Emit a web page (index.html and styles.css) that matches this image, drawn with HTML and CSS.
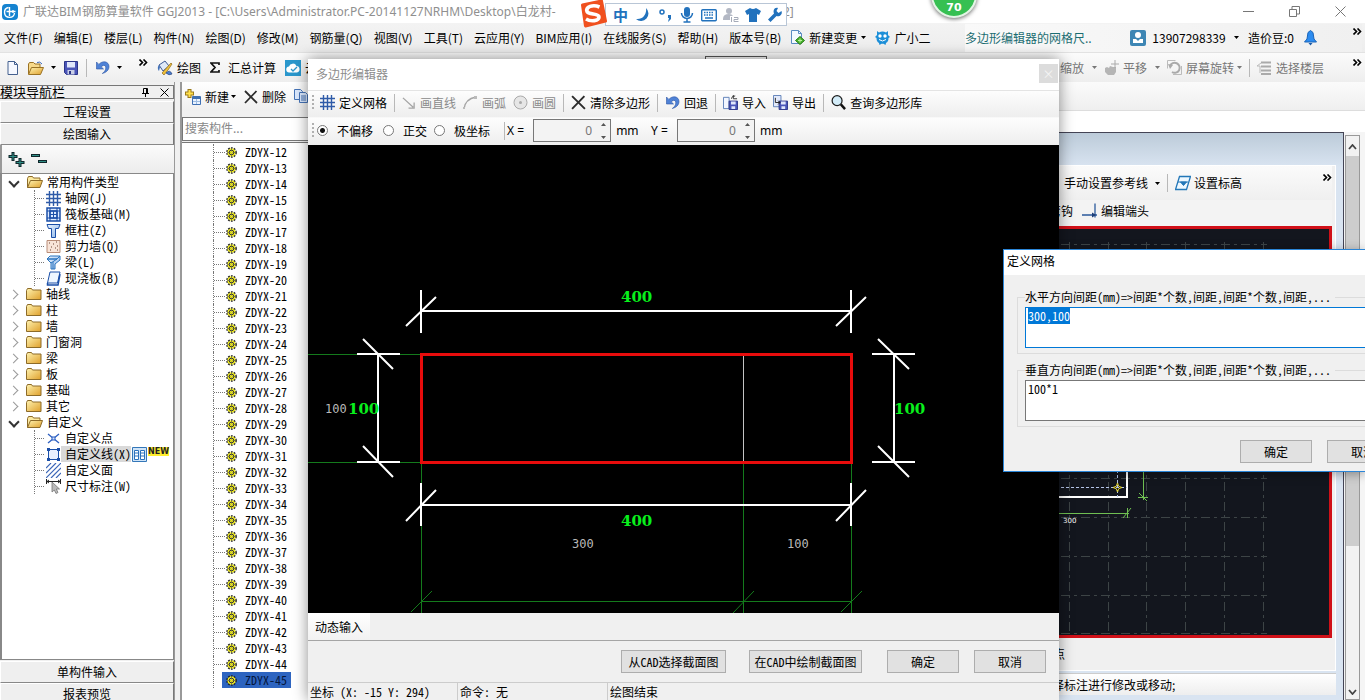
FILE: index.html
```html
<!DOCTYPE html>
<html lang="zh-CN">
<head>
<meta charset="utf-8">
<title>广联达BIM钢筋算量软件 GGJ2013</title>
<link rel="stylesheet" href="styles.css">
</head>
<body>
<svg class="defs" aria-hidden="true">
  <defs>
    <linearGradient id="gold" x1="0" y1="0" x2="1" y2="1"><stop offset="0" stop-color="#fff3b0"/><stop offset="1" stop-color="#dfa02c"/></linearGradient>
    <linearGradient id="blue" x1="0" y1="0" x2="1" y2="1"><stop offset="0" stop-color="#eaf4ff"/><stop offset="1" stop-color="#8ab4e8"/></linearGradient>
  </defs>
  <symbol id="caret" viewBox="0 0 5 3"><path d="M0 0h5L2.500 3z" fill="currentColor"/></symbol>
  <symbol id="more" viewBox="0 0 9 7"><path d="M.5.5l3 3-3 3M4.500.5l3 3-3 3" fill="none" stroke="#000" stroke-width="1.600"/></symbol>
  <symbol id="gear" viewBox="0 0 11 11"><circle cx="5.500" cy="5.500" r="4.300" fill="#f2ee1c"/><circle cx="5.500" cy="5.500" r="4.700" fill="none" stroke="#222" stroke-width="1.300" stroke-dasharray="1.800 1.200"/><circle cx="5.500" cy="5.500" r="2.300" fill="none" stroke="#333"/><path d="M5.500 1v9M1 5.500h9" stroke="#555" stroke-width=".6"/><circle cx="5.500" cy="5.500" r="1" fill="#f2ee1c"/></symbol>
  <symbol id="folder" viewBox="0 0 16 12"><path d="M.5 11.500v-9l1-2h4l1 1.500h8.500v9.500z" fill="url(#gold)" stroke="#8d6b28"/></symbol>
  <symbol id="folder-open" viewBox="0 0 16 12"><path d="M.5 11.500v-9l1-2h4l1 1.500h6.500v3" fill="#fbe9a0" stroke="#8d6b28"/><path d="M.5 11.500l3-7h12l-2.500 7z" fill="url(#gold)" stroke="#8d6b28"/></symbol>
  <symbol id="grid" viewBox="0 0 15 15"><path d="M3.500 0v15M7.500 0v15M11.500 0v15M0 3.500h15M0 7.500h15M0 11.500h15" stroke="#2f5ba8" stroke-width="1.400" fill="none"/></symbol>
  <symbol id="cross" viewBox="0 0 14 14"><path d="M1 1l12 12M12.500 1L1 13" stroke="#2c2c2c" stroke-width="1.800" fill="none"/></symbol>
  <symbol id="undo" viewBox="0 0 15 15"><path d="M1.500 2v7h7L6.300 6.900C8 4.500 11 5 10.800 8c-.2 2.500-1.500 4-3.500 5.500 4-1 6.700-3.500 6.700-7C14 1.500 7.500 0 3.900 4.400z" fill="#4f82d6" stroke="#2c54a4" stroke-width=".6"/></symbol>
  <symbol id="disk" viewBox="0 0 14 14"><path d="M.5.5h13v13h-11l-2-2z" fill="#4a55b8" stroke="#2b3488"/><path d="M3 1h8v5.500H3z" fill="#dfe6fb"/><path d="M3.500 9h7v4.500h-7z" fill="#c9cfe6"/><path d="M5 10h2v3H5z" fill="#2b3488"/></symbol>
</svg>

<div class="app">
  <header class="titlebar">
    <svg class="i16" viewBox="0 0 16 16"><rect width="16" height="16" rx="4" fill="#1583d0"/><path d="M6.500 3.500A5 5 0 1 0 12.500 9M7.500 3v9M4.500 7.500h9M11 6v3" stroke="#fff" stroke-width="1.400" fill="none"/></svg>
    <h1>广联达BIM钢筋算量软件 GGJ2013 - [C:\Users\Administrator.PC-20141127NRHM\Desktop\白龙村-</h1>
    <span class="title-tail">2]</span>
    <div class="window-buttons">
      <button aria-label="最小化"><svg viewBox="0 0 11 11"><path d="M0 5.500h11" stroke="#777" fill="none"/></svg></button>
      <button aria-label="还原"><svg viewBox="0 0 11 11"><path d="M.5 3.500h7v7h-7zM3 3V.5h7.500V8H8" stroke="#777" fill="none"/></svg></button>
      <button aria-label="关闭"><svg viewBox="0 0 11 11"><path d="M.5.5l10 10M10.500.5l-10 10" stroke="#777" fill="none"/></svg></button>
    </div>
  </header>

  <nav class="menubar">
    <button>文件(F)</button><button>编辑(E)</button><button>楼层(L)</button><button>构件(N)</button><button>绘图(D)</button><button>修改(M)</button><button>钢筋量(Q)</button><button>视图(V)</button><button>工具(T)</button><button>云应用(Y)</button><button>BIM应用(I)</button><button>在线服务(S)</button><button>帮助(H)</button><button>版本号(B)</button>
    <button class="tool"><svg class="i15" viewBox="0 0 15 15"><path d="M1.500.5h7l3 3v10h-10z" fill="#f4f9ff" stroke="#5b8cc2"/><path d="M8.500.5v3h3" fill="none" stroke="#5b8cc2"/><path d="M10 6.500l4.500 4-4.500 4-4.500-4z" fill="#49b32c" stroke="#287a16"/><path d="M10 8.500v4M8 10.500h4" stroke="#b9f09f"/></svg>新建变更<svg class="caret"><use href="#caret"/></svg></button>
    <button class="tool"><svg class="i15" viewBox="0 0 15 15"><path d="M2 1l2 1.500a7 7 0 0 1 7 0L13 1v4l2 2-1.500 1c0 3-1 4-2.500 5l-.5 2-2-1.300h-2L4.500 15 4 13C2.500 12 1.500 11 1.500 8L0 7l2-2z" fill="#1c8fd8"/><circle cx="5" cy="6" r="1.700" fill="#fff"/><circle cx="10" cy="6" r="1.700" fill="#fff"/><path d="M4 9.500q3.500 3 7 0" stroke="#fff" fill="none"/></svg>广小二</button>
    <div class="account">
      <a class="notice" href="#">多边形编辑器的网格尺..</a>
      <button class="tool"><svg class="i16" viewBox="0 0 16 16"><rect width="16" height="16" rx="2" fill="#3d86b4"/><circle cx="8" cy="5" r="3" fill="#fff"/><path d="M3 9h3l2 2 2-2h3v4H3z" fill="#fff"/></svg><span class="phone">13907298339</span><svg class="caret"><use href="#caret"/></svg></button>
      <span>造价豆:0</span>
      <svg class="bell" viewBox="0 0 13 16"><path d="M6.500.5L9 2.500l1 6.500 2.500 3h-12L3 9l1-6.500z" fill="#2c8cf0" stroke="#1b64b8"/><path d="M4.500 13h4l-2 2.500z" fill="#1b5ba8"/></svg>
      <svg class="more"><use href="#more"/></svg>
    </div>
  </nav>

  <div class="toolbar">
    <div class="quick">
      <button aria-label="新建"><svg class="i14" viewBox="0 0 14 14"><path d="M2 .5h6.500l3 3v10H2z" fill="#f5f8ff" stroke="#44608f"/><path d="M8.500.5v3h3" fill="none" stroke="#44608f"/></svg></button>
      <button aria-label="打开" class="tool"><svg class="i16" viewBox="0 0 16 14"><path d="M.5 13V3l1-1.500h4L7 3h5v3" fill="#f7d98a" stroke="#9a7224"/><path d="M.5 13.500l3-7h12l-3 7z" fill="url(#gold)" stroke="#9a7224"/><path d="M9 1.500q3-1.500 5 1.500" stroke="#3b68b8" fill="none"/></svg><svg class="caret"><use href="#caret"/></svg></button>
      <button aria-label="保存"><svg class="i14"><use href="#disk"/></svg></button>
      <i class="sep"></i>
      <button aria-label="撤销" class="tool"><svg class="i15"><use href="#undo"/></svg><svg class="caret"><use href="#caret"/></svg></button>
    </div>
    <svg class="more"><use href="#more"/></svg>
    <div class="tools">
      <button class="tool"><svg class="i16" viewBox="0 0 16 16"><path d="M2 5l6-4 4 5-6 5z" fill="#dfe9f8" stroke="#3e5a94"/><path d="M2 5c-2 2-1 5 0 6l1-4" fill="#4070b8"/><path d="M14 3l1 1-4 6-4 5-2-2z" fill="#f0c23c" stroke="#8b6516" stroke-width=".7"/><path d="M9 13q4-4 6 1-3 2-6-1z" fill="#4a7fd0" stroke="#27427c" stroke-width=".7"/></svg>绘图</button>
      <button class="tool"><svg class="sigma" viewBox="0 0 10 11"><path d="M9 3V1H1l4 4.500L1 10h8V8" fill="none" stroke="#111" stroke-width="1.700"/></svg>汇总计算</button>
      <button class="tool"><svg class="i16" viewBox="0 0 16 16"><rect width="16" height="16" fill="#2a97cc"/><path d="M4.500 12.500a3 3 0 0 1-.5-6 4 4 0 0 1 7.500-.5 3.300 3.300 0 0 1 .5 6.500z" fill="#fff"/><path d="M6 9l2 2 4-4" stroke="#2a97cc" fill="none" stroke-width="1.300"/></svg>云应用</button>
    </div>
    <div class="view-tools">
      <button class="tool">缩放<svg class="caret"><use href="#caret"/></svg></button>
      <button class="tool"><svg class="i15" viewBox="0 0 15 15"><path d="M1 8l2-1 2 1 1-2 3 1 3 0v5l-2 3H4L1 12z" fill="#b5b5b5"/><path d="M11 0v8M7 4h8" stroke="#aaa"/></svg>平移<svg class="caret"><use href="#caret"/></svg></button>
      <button class="tool tight"><svg class="i15" viewBox="0 0 15 15"><path d="M.5.5h8M.5.5v8M6 14.500h8.500V6" stroke="#bbb" fill="none"/><path d="M3 6a5 5 0 1 1 2 6" stroke="#aaa" stroke-width="2" fill="none"/><path d="M1 4l5 1-3 4z" fill="#aaa"/></svg>屏幕旋转<svg class="caret"><use href="#caret"/></svg></button>
      <i class="sep"></i>
      <button class="tool"><svg class="i15" viewBox="0 0 15 15"><path d="M4 2.500h10M4 6.500h10M4 10.500h10M4 14h10" stroke="#aaa" stroke-width="2"/><path d="M4 3L0 6h3v7" stroke="#bbb" fill="none"/></svg>选择楼层</button>
    </div>
    <svg class="more"><use href="#more"/></svg>
  </div>

  <div class="workspace">
    <aside class="navigator">
      <div class="nav-title"><h2>模块导航栏</h2>
        <button aria-label="固定"><svg viewBox="0 0 9 9"><path d="M2.500.5h4v5h-4zM1 5.500h7M4.500 6v3M5.500 1v4" stroke="#000" fill="none"/></svg></button>
        <button aria-label="关闭"><svg viewBox="0 0 9 9"><path d="M.5.5l8 8M8.500.5l-8 8" stroke="#000" fill="none"/></svg></button>
      </div>
      <button class="nav-button">工程设置</button>
      <button class="nav-button">绘图输入</button>
      <div class="nav-tools">
        <button aria-label="展开"><svg viewBox="0 0 17 16"><path d="M5 1v9M.5 5.500h9M12 7v9M7.500 11.500h9" stroke="#10262a" stroke-width="3"/><path d="M5 2v7M1.500 5.500h7M12 8v7M8.500 11.500h7" stroke="#2f8f86"/></svg></button>
        <button aria-label="折叠"><svg viewBox="0 0 17 16"><path d="M0 4.500h9M7 10.500h9" stroke="#10262a" stroke-width="3"/><path d="M1 4.500h7M8 10.500h7" stroke="#2f8f86"/></svg></button>
      </div>
      <ul class="tree">
        <li class="node open"><svg class="fold"><use href="#folder-open"/></svg>常用构件类型</li>
        <li><ul class="branch">
          <li><svg class="i15"><use href="#grid"/></svg>轴网(J)</li>
          <li><svg class="i15" viewBox="0 0 15 15"><path d="M1 1h13v13H1zM4 4h7v7H4z" fill="#dceaff" stroke="#1b4fa8" stroke-width="1.500"/><path d="M4 1v13M11 1v13M1 4h13M1 11h13M7.500 4v7M4 7.500h7" stroke="#1b4fa8"/></svg>筏板基础(M)</li>
          <li><svg class="i15" viewBox="0 0 15 15"><path d="M1 1.500h13l-1.500 4H9.500v9h-4v-9h-3z" fill="url(#blue)" stroke="#1b4fa8"/></svg>框柱(Z)</li>
          <li><svg class="i15" viewBox="0 0 15 15"><path d="M1 1.500h13v12H1z" fill="#f8e4d8" stroke="#b98d78"/><path d="M3 4h1M7 5h1M10 3h1M5 8h1M9 9h1M4 11h1M11 11h1M11 7h1" stroke="#6d4332"/></svg>剪力墙(Q)</li>
          <li><svg class="i15" viewBox="0 0 15 15"><path d="M1 4l3-3h10l-3 3zM5 14V8l-4-4h10l3-3v4l-5 4v5z" fill="url(#blue)" stroke="#2b75bf"/><path d="M5 8l6-4M7 14V7" stroke="#2b75bf"/></svg>梁(L)</li>
          <li><svg class="i15" viewBox="0 0 15 15"><path d="M4 1h10l-2.500 11h-10z" fill="#eef6ff" stroke="#1b4fa8"/><path d="M1.500 12v2h10.500L14 3" fill="none" stroke="#1b4fa8" stroke-width="1.500"/></svg>现浇板(B)</li>
        </ul></li>
        <li class="node"><svg class="fold"><use href="#folder"/></svg>轴线</li>
        <li class="node"><svg class="fold"><use href="#folder"/></svg>柱</li>
        <li class="node"><svg class="fold"><use href="#folder"/></svg>墙</li>
        <li class="node"><svg class="fold"><use href="#folder"/></svg>门窗洞</li>
        <li class="node"><svg class="fold"><use href="#folder"/></svg>梁</li>
        <li class="node"><svg class="fold"><use href="#folder"/></svg>板</li>
        <li class="node"><svg class="fold"><use href="#folder"/></svg>基础</li>
        <li class="node"><svg class="fold"><use href="#folder"/></svg>其它</li>
        <li class="node open"><svg class="fold"><use href="#folder-open"/></svg>自定义</li>
        <li><ul class="branch">
          <li><svg class="i15" viewBox="0 0 15 15"><path d="M2 3l11 9M13 3L2 12" stroke="#2d5fc0" stroke-width="1.300"/><path d="M6 6h3v3H6z" fill="#cfe0ff" stroke="#2d5fc0"/></svg>自定义点</li>
          <li class="picked"><svg class="i15" viewBox="0 0 15 15"><path d="M2.500 2.500h10v10h-10z" fill="#e8f0ff" stroke="#1b4fa8"/><path d="M1 1h3v3H1zM11 1h3v3h-3zM1 11h3v3H1zM11 11h3v3h-3z" fill="#1b4fa8"/></svg><span>自定义线(X)</span><svg class="i15" viewBox="0 0 15 15"><path d="M.5.5h14v14H.5z" fill="#cfe4f8" stroke="#3477b8"/><path d="M2.500 3.500h4v9h-4zM8.500 3.500h4v9h-4zM3 6h3M3 9h3M9 6h3M9 9h3" fill="#fff" stroke="#2a70bc"/></svg><b class="new">NEW</b></li>
          <li><svg class="i15" viewBox="0 0 15 15"><path d="M0 5l5-5M0 10L10 0M0 15L15 0M5 15L15 5M10 15l5-5" stroke="#3b66b8" stroke-width="1.200"/></svg>自定义面</li>
          <li><svg class="i15" viewBox="0 0 15 15"><path d="M.5 0v5M14.500 0v5M1 2.500h13M3 1L1 2.500 3 4M12 1l2 1.500L12 4" stroke="#222" fill="none"/><path d="M6 3v10l2.300-2 1.700 3.500 2-1-1.700-3.500h3.200z" fill="#bbb" stroke="#777" stroke-width=".8"/></svg>尺寸标注(W)</li>
        </ul></li>
      </ul>
      <button class="nav-button">单构件输入</button>
      <button class="nav-button last">报表预览</button>
    </aside>

    <section class="components">
      <div class="component-tools">
        <button class="tool"><svg class="i16" viewBox="0 0 16 16"><path d="M4.500 0v9M0 4.500h9" stroke="#9a7a1c" stroke-width="4"/><path d="M4.500 1v7M1 4.500h7" stroke="#ffe04c" stroke-width="2"/><path d="M7.500 7.500h8v8h-8z" fill="#eaf3ff" stroke="#3f70b4"/><path d="M7 8h9v2H7z" fill="#3f70b4"/><path d="M8 12.500h7M11.500 10v5" stroke="#9dbce2"/></svg>新建<svg class="caret"><use href="#caret"/></svg></button>
        <button class="tool"><svg class="i14"><use href="#cross"/></svg>删除</button>
        <button class="tool"><svg class="i15" viewBox="0 0 15 15"><path d="M.5.5h6l2 2v8h-8z" fill="#dceaff" stroke="#4674b8"/><path d="M5.500 3.500h6l2 2v8h-8z" fill="#dceaff" stroke="#4674b8"/><path d="M7 7h5M7 9h5M7 11h5" stroke="#4674b8"/></svg>复制</button>
      </div>
      <input class="search" type="text" placeholder="搜索构件..." aria-label="搜索构件">
      <ul class="component-list">
        <li><svg><use href="#gear"/></svg><span>ZDYX-12</span></li>
        <li><svg><use href="#gear"/></svg><span>ZDYX-13</span></li>
        <li><svg><use href="#gear"/></svg><span>ZDYX-14</span></li>
        <li><svg><use href="#gear"/></svg><span>ZDYX-15</span></li>
        <li><svg><use href="#gear"/></svg><span>ZDYX-16</span></li>
        <li><svg><use href="#gear"/></svg><span>ZDYX-17</span></li>
        <li><svg><use href="#gear"/></svg><span>ZDYX-18</span></li>
        <li><svg><use href="#gear"/></svg><span>ZDYX-19</span></li>
        <li><svg><use href="#gear"/></svg><span>ZDYX-20</span></li>
        <li><svg><use href="#gear"/></svg><span>ZDYX-21</span></li>
        <li><svg><use href="#gear"/></svg><span>ZDYX-22</span></li>
        <li><svg><use href="#gear"/></svg><span>ZDYX-23</span></li>
        <li><svg><use href="#gear"/></svg><span>ZDYX-24</span></li>
        <li><svg><use href="#gear"/></svg><span>ZDYX-25</span></li>
        <li><svg><use href="#gear"/></svg><span>ZDYX-26</span></li>
        <li><svg><use href="#gear"/></svg><span>ZDYX-27</span></li>
        <li><svg><use href="#gear"/></svg><span>ZDYX-28</span></li>
        <li><svg><use href="#gear"/></svg><span>ZDYX-29</span></li>
        <li><svg><use href="#gear"/></svg><span>ZDYX-30</span></li>
        <li><svg><use href="#gear"/></svg><span>ZDYX-31</span></li>
        <li><svg><use href="#gear"/></svg><span>ZDYX-32</span></li>
        <li><svg><use href="#gear"/></svg><span>ZDYX-33</span></li>
        <li><svg><use href="#gear"/></svg><span>ZDYX-34</span></li>
        <li><svg><use href="#gear"/></svg><span>ZDYX-35</span></li>
        <li><svg><use href="#gear"/></svg><span>ZDYX-36</span></li>
        <li><svg><use href="#gear"/></svg><span>ZDYX-37</span></li>
        <li><svg><use href="#gear"/></svg><span>ZDYX-38</span></li>
        <li><svg><use href="#gear"/></svg><span>ZDYX-39</span></li>
        <li><svg><use href="#gear"/></svg><span>ZDYX-40</span></li>
        <li><svg><use href="#gear"/></svg><span>ZDYX-41</span></li>
        <li><svg><use href="#gear"/></svg><span>ZDYX-42</span></li>
        <li><svg><use href="#gear"/></svg><span>ZDYX-43</span></li>
        <li><svg><use href="#gear"/></svg><span>ZDYX-44</span></li>
        <li class="current"><svg><use href="#gear"/></svg><span>ZDYX-45</span></li>
      </ul>
    </section>

    <section class="drawing">
      <div class="drawing-tools"></div>
      <div class="mdi">
        <div class="child">
          <div class="child-frame">
            <div class="child-tools">
              <button class="tool">手动设置参考线<svg class="caret"><use href="#caret"/></svg></button>
              <i class="sep"></i>
              <button class="tool"><svg class="i16" viewBox="0 0 16 15"><path d="M4.500 1h11l-4 13H.5z" fill="#eef8ff" stroke="#2377b8" stroke-width="1.300"/><path d="M3 6.500h10M5.500 6.500h6l-3 3.500z" fill="#2377b8" stroke="#2377b8"/></svg>设置标高</button>
              <svg class="more"><use href="#more"/></svg>
            </div>
            <div class="child-tools second">
              <button class="tool">弯钩</button>
              <button class="tool"><svg class="i16" viewBox="0 0 16 15"><path d="M0 11.500h15M13 0v14" stroke="#2b5a9c" stroke-width="1.300"/><path d="M10 9l4 2.500-4 2.500z" fill="#1e3f78"/></svg>编辑端头</button>
            </div>
            <div class="model">
              <svg><g transform="translate(-1040 -229)">
                <g stroke="#3d4446" stroke-dasharray="9 4 3 4" fill="none">
                  <path d="M1040 244.500h226M1040 283.500h226M1040 322.500h226M1040 361.500h226M1040 400.500h226M1040 439.500h226M1040 478.500h226M1040 517.500h226M1040 556.500h226M1040 595.500h226M1040 633.500h226"/>
                  <path d="M1068.500 242v394M1107.500 242v394M1145.500 242v394M1184.500 242v394M1223.500 242v394M1262.500 242v394"/>
                </g>
                <path d="M1126 440v57h-80" stroke="#fff" stroke-width="2" fill="none"/>
                <path d="M1040 487.500h86M1116.500 440v57" stroke="#b5c4e8" stroke-dasharray="3 2"/>
                <path d="M1116.500 483l1.200 3.300 3.300 1.200-3.300 1.200-1.200 3.300-1.200-3.300-3.300-1.200 3.300-1.200z" fill="none" stroke="#e8d832"/>
                <path d="M1142.500 440v60M1137 497.500h10M1138 493l8 8M1040 513.500h88M1126.500 508v10M1122 518l8-10" stroke="#6fbf52" fill="none"/>
                <text class="model-label" x="1062" y="523">300</text>
              </g></svg>
            </div>
            <div class="child-tip">节点</div>
          </div>
          <div class="child-status">选择标注进行修改或移动;</div>
        </div>
        <div class="scrollbar"><svg viewBox="0 0 9 6"><path d="M1 5l3.500-4L8 5" stroke="#444" stroke-width="1.800" fill="none"/></svg><i></i><svg viewBox="0 0 9 6"><path d="M1 1l3.500 4L8 1" stroke="#444" stroke-width="1.800" fill="none"/></svg></div>
      </div>
    </section>
  </div>
</div>

<div class="hidden-box"></div>

<section class="editor">
  <div class="editor-title"><h2>多边形编辑器</h2><button aria-label="关闭">×</button></div>
  <div class="editor-tools">
    <i class="grip"></i>
    <button class="tool"><svg class="i15"><use href="#grid"/></svg>定义网格</button>
    <i class="sep"></i>
    <button class="tool off"><svg class="i14" viewBox="0 0 15 15"><path d="M1 2l11 10M13 7v6H7" stroke="#a5a5a5" stroke-width="1.400" fill="none"/></svg>画直线</button>
    <button class="tool off"><svg class="i15" viewBox="0 0 15 15"><path d="M1 14Q2 4 13 2" stroke="#a5a5a5" stroke-width="1.400" fill="none"/><path d="M11 1h3v3h-3zM0 12h2v2H0z" fill="#bbb"/></svg>画弧</button>
    <button class="tool off"><svg class="i15" viewBox="0 0 15 15"><circle cx="7.500" cy="7.500" r="6.500" fill="#e6e6e6" stroke="#aaa"/><circle cx="7.500" cy="7.500" r="1.500" fill="#aaa"/></svg>画圆</button>
    <i class="sep"></i>
    <button class="tool"><svg class="i15"><use href="#cross"/></svg>清除多边形</button>
    <i class="sep"></i>
    <button class="tool"><svg class="i15"><use href="#undo"/></svg>回退</button>
    <i class="sep"></i>
    <button class="tool"><svg class="i15" viewBox="0 0 16 16"><path d="M.5 2.500h6v12h-6z" fill="#f2f6ff" stroke="#5d7fb6"/><path d="M6.500 6.500h9v9h-9z" fill="#4a55b8" stroke="#2b3488"/><path d="M8.500 7h5v3h-5zM9 12h4v3H9z" fill="#dfe6fb"/><path d="M9 4q0-3 4-3M11 0v4h4" stroke="#333" fill="none"/></svg>导入</button>
    <button class="tool"><svg class="i15" viewBox="0 0 16 16"><path d="M.5.5h8v12h-8z" fill="#e3eafb" stroke="#5d7fb6"/><path d="M6.500 6.500h9v9h-9z" fill="#4a55b8" stroke="#2b3488"/><path d="M8.500 7h5v3h-5zM9 12h4v3H9z" fill="#dfe6fb"/><path d="M2.500 3v5h5M5.500 6l2 2-2 2" stroke="#222" fill="none"/></svg>导出</button>
    <i class="sep"></i>
    <button class="tool"><svg class="i15" viewBox="0 0 16 16"><circle cx="6.500" cy="6" r="5.300" fill="#d3ecf8" stroke="#1c1c1c" stroke-width="1.300"/><path d="M10.500 10l4.500 5" stroke="#111" stroke-width="2.600"/></svg>查询多边形库</button>
  </div>
  <form class="editor-options">
    <i class="grip"></i>
    <label class="r1"><input type="radio" name="mode" checked>不偏移</label>
    <label class="r2"><input type="radio" name="mode">正交</label>
    <label class="r3"><input type="radio" name="mode">极坐标</label>
    <i class="sep"></i>
    <label class="offset">X = <span class="spin"><input type="text" value="0"><svg viewBox="0 0 5 16"><path d="M0 3L2.500 0 5 3zM0 13l2.500 3L5 13z" fill="#555"/></svg></span>mm</label>
    <label class="offset">Y = <span class="spin"><input type="text" value="0"><svg viewBox="0 0 5 16"><path d="M0 3L2.500 0 5 3zM0 13l2.500 3L5 13z" fill="#555"/></svg></span>mm</label>
  </form>
  <div class="editor-canvas">
    <svg><g transform="translate(-308 -145)">
      <path d="M308 354.500h113M308 462.500h113M421.500 463v150M743.500 463v150M851.500 463v150M421 601.500h431M411 612l21-21M733 613l21-22M841 612l21-21" stroke="#147a1c" fill="none"/>
      <path d="M743.500 356v105" stroke="#c4c4c4"/>
      <path d="M421.500 354.500h430v108h-430z" fill="none" stroke="#e80c0c" stroke-width="3"/>
      <g stroke="#fff" stroke-width="2" fill="none">
        <path d="M421 290v43M851 290v43M421 311h430M406 326l30-29M836 326l30-29"/>
        <path d="M421 483v43M851 483v43M421 505h430M406 521l30-31M836 521l30-31"/>
        <path d="M357 354h43M357 462h43M378 354v108M363 339l30 30M363 446l30 31"/>
        <path d="M872 354h43M872 462h43M894 354v108M878 339l31 30M878 446l31 31"/>
      </g>
      <g class="dim"><text x="621" y="302">400</text><text x="621" y="526">400</text><text x="348" y="414">100</text><text x="894" y="414">100</text></g>
      <g class="step"><text x="325" y="413">100</text><text x="572" y="548">300</text><text x="787" y="548">100</text></g>
    </g></svg>
  </div>
  <div class="editor-tab"><button>动态输入</button></div>
  <div class="editor-actions">
    <button class="push w105">从CAD选择截面图</button>
    <button class="push w113">在CAD中绘制截面图</button>
    <button class="push w72">确定</button>
    <button class="push w72">取消</button>
  </div>
  <footer class="editor-status"><span>坐标 (X: -15 Y: 294)</span><span>命令: 无</span><span>绘图结束</span></footer>
</section>

<section class="grid-dialog">
  <h2>定义网格</h2>
  <div class="grid-body">
    <fieldset><legend><label for="hgap">水平方向间距(mm)=&gt;间距*个数,间距,间距*个数,间距,...</label></legend><textarea id="hgap" class="active">300,100</textarea></fieldset>
    <fieldset><legend><label for="vgap">垂直方向间距(mm)=&gt;间距*个数,间距,间距*个数,间距,...</label></legend><textarea id="vgap">100*1</textarea></fieldset>
    <div class="grid-actions"><button class="push w72">确定</button><button class="push w72">取消</button></div>
  </div>
</section>

<div class="ime">
  <svg class="sogou" viewBox="0 0 28 28"><path d="M4 5l19-4 4 20-20 5z" fill="#f0501e" stroke="#f0501e" stroke-width="3" stroke-linejoin="round"/><path d="M21 7C14 4 7 7 8.500 11.500c1.500 3.500 12 1.500 12 5.500 0 4-8 5-13 2" stroke="#fff" stroke-width="3.600" fill="none"/></svg>
  <div class="ime-bar">
    <span>中</span>
    <svg viewBox="0 0 16 16"><path d="M11 1a7 7 0 1 1-10 11c7 1 11-5 10-11z" fill="#2272bd"/></svg>
    <svg viewBox="0 0 16 16"><circle cx="5" cy="5" r="2" fill="none" stroke="#2272bd" stroke-width="1.500"/><path d="M11 8h3v4l-3 3 1-4h-1z" fill="#2272bd"/></svg>
    <svg viewBox="0 0 16 16"><rect x="5" y="0" width="6" height="10" rx="3" fill="#2272bd"/><path d="M2.500 6a5.500 5.500 0 0 0 11 0M8 12v3M4.500 15h7" stroke="#2272bd" stroke-width="1.500" fill="none"/></svg>
    <svg viewBox="0 0 16 16"><rect x=".7" y="2.700" width="14.600" height="11" rx="1" fill="none" stroke="#2272bd" stroke-width="1.400"/><path d="M3 5.500h10M3 8h10" stroke="#2272bd" stroke-width="1.500" stroke-dasharray="1.500 1"/><path d="M4 11h8" stroke="#2272bd" stroke-width="1.500"/></svg>
    <svg viewBox="0 0 16 16"><circle cx="6" cy="4" r="3" fill="#b3b8c4"/><path d="M0 12q0-5 6-5 3 0 4 2H7v4H0z" fill="#b3b8c4"/><path d="M8.500 10v5M11 10.500h4v2h-4v2h4.500" stroke="#a5abb8" fill="none"/></svg>
    <svg viewBox="0 0 16 16"><path d="M5 1q3 2 6 0l5 3-2 4-2-1v8H4V7L2 8 0 4z" fill="#2272bd"/></svg>
    <svg viewBox="0 0 16 16"><path d="M14.500 4l-3 2-2-2 1.500-3C7 0 6 4 7 6.500L1 12.500 3.500 15l6-6C12 10 16 8 14.500 4z" fill="#2272bd"/></svg>
  </div>
</div>
<div class="ball">70</div>
<script src="main.js"></script>
</body>
</html>
```
FILE: main.js
```js
const gap = document.getElementById("hgap");
gap.focus({ preventScroll: true });
gap.setSelectionRange(0, gap.value.length);
```
FILE: styles.css
```css
* { box-sizing: border-box; }
html, body { height: 100%; }
body { margin: 0; overflow: hidden; position: relative; background: #f0f0f0; color: #000; font: 12px/16px "Noto Sans CJK SC", sans-serif; }
h1, h2 { margin: 0; font-size: 12px; font-weight: 400; }
ul { list-style: none; margin: 0; padding: 0; }
svg { flex: none; display: block; }
button { border: 0; padding: 0; margin: 0; background: none; color: inherit; font: inherit; white-space: nowrap; }
input, textarea { font: inherit; color: inherit; }
.defs { position: absolute; width: 0; height: 0; }
.i14 { width: 14px; height: 14px; }
.i15 { width: 15px; height: 15px; }
.i16 { width: 16px; height: 16px; }
.caret { width: 5px; height: 3px; }
.more { width: 9px; height: 7px; }
.tool { display: flex; align-items: center; gap: 4px; flex: none; }
.sep { flex: none; width: 1px; height: 18px; background: #b8b8b8; }
.grip { flex: none; width: 2px; height: 16px; background: repeating-linear-gradient(#b0b0b0 0 2px, transparent 2px 4px); }

.app { display: flex; flex-direction: column; height: 100%; }
.titlebar { display: flex; align-items: center; flex: none; height: 23px; padding: 0 19px 0 2px; background: #fff; color: #8f8f8f; white-space: nowrap; font-family: "Noto Sans", "Noto Sans CJK SC", sans-serif; }
.titlebar h1 { margin-left: 5px; width: 560px; }
.title-tail { margin-left: 200px; }
.window-buttons { display: flex; gap: 35px; margin-left: auto; }
.window-buttons svg { width: 11px; height: 11px; }

.menubar { display: flex; align-items: center; flex: none; height: 29px; padding: 0 3px 0 4px; gap: 11px; background: linear-gradient(#f3f3f3, #ededed); white-space: nowrap; }
.menubar > .tool { gap: 4px; margin-left: -2px; }
.account { display: flex; align-items: center; margin-left: auto; width: 397px; height: 28px; background: linear-gradient(90deg, #f9f9f9, #f0f0f0); }
.notice { color: #1c6d72; text-decoration: none; width: 165px; }
.account > span { margin-left: 9px; }
.phone { width: 78px; }
.account .tool { gap: 4px; }
.account .tool .caret { margin-left: 2px; }
.bell { width: 13px; height: 16px; margin-left: 10px; }
.account .more { margin-left: auto; margin-bottom: 12px; }

.toolbar { display: flex; align-items: center; flex: none; height: 30px; padding-right: 3px; background: linear-gradient(#fbfbfb, #eee); border-top: 1px solid #e2e2e2; }
.quick { display: flex; align-items: center; gap: 8px; padding-left: 6px; width: 139px; }
.quick .tool { gap: 7px; }
.toolbar .more { margin-bottom: 10px; }
.tools { display: flex; align-items: center; gap: 9px; margin-left: 9px; }
.sigma { width: 10px; height: 11px; margin-right: 4px; }
.view-tools { display: flex; align-items: center; gap: 7px; margin-left: auto; margin-right: 29px; color: #777; }
.view-tools .caret { margin-left: 4px; }
.view-tools .tight .caret { margin-left: -1px; }

.workspace { display: flex; flex: 1; min-height: 0; }
.navigator { display: flex; flex-direction: column; flex: none; width: 175px; padding-top: 3px; border-right: 1px solid #999; background: #f0f0f0; overflow: hidden; }
.nav-title { display: flex; align-items: center; flex: none; height: 14px; gap: 10px; padding-right: 4px; border: 1px solid #777; border-left: 0; margin-bottom: 2px; }
.nav-title h2 { margin-right: auto; font-size: 13px; line-height: 12px; }
.nav-title svg { width: 9px; height: 9px; }
.nav-button { flex: none; height: 22px; border: 1px solid; border-color: #fff #777 #888 #fff; background: #efefef; }
.nav-button.last { margin-bottom: -5px; }
.nav-tools { display: flex; flex: none; gap: 6px; height: 28px; padding: 6px; background: linear-gradient(#fbfbfb, #ececec); border-left: 2px solid #999; }
.nav-tools svg { width: 17px; height: 16px; }
.tree { flex: 1; overflow: hidden; margin-bottom: 1px; border: 1px solid #888; border-left-width: 2px; background: #fff; white-space: nowrap; font-family: "Noto Sans Mono CJK SC", "Noto Sans CJK SC", monospace; }
.node { display: flex; align-items: center; height: 16px; padding-left: 8px; gap: 4px; }
.node::before { content: ""; width: 6px; height: 6px; margin: 0 3px 0 0; border: solid #999; border-width: 1px 1px 0 0; transform: rotate(45deg); }
.node.open::before { border-color: #333; border-width: 2px 2px 0 0; transform: rotate(135deg); }
.fold { width: 16px; height: 12px; margin-left: 2px; }
.branch { margin-left: 32px; border-left: 1px dotted #777; }
.branch li { display: flex; align-items: center; height: 16px; gap: 4px; padding-left: 11px; background: repeating-linear-gradient(90deg, #777 0 1px, transparent 1px 2px) 0 8px / 10px 1px no-repeat; }
.picked span { background: #d9d9d9; margin: 0 -3px 0 -4px; padding-left: 4px; }
.new { font: bold 8px/9px "DejaVu Sans", sans-serif; color: #222; background: #ffee2e; margin: 0 0 6px -3px; }

.components { display: flex; flex-direction: column; flex: 1; min-width: 0; margin-left: 5px; border-left: 2px solid #999; background: #f0f0f0; }
.component-tools { display: flex; align-items: center; flex: none; gap: 8px; height: 29px; padding: 0 3px; background: linear-gradient(#fff, #efefef); }
.component-tools .caret { margin-left: -2px; }
.search { flex: none; width: 100%; height: 24px; margin: 6px 0 1px; padding: 0 2px 3px; border: 1px solid #777; border-radius: 0; background: #fff; }
.search::placeholder { color: #888; opacity: 1; }
.component-list { flex: 1; overflow: hidden; border-top: 1px solid #777; background: #fff; padding: 1px 0 0 31px; font: 12px/16px "Noto Sans Mono CJK SC", "Liberation Serif", serif; }
.component-list li { display: flex; align-items: center; height: 16px; border-left: 1px dotted #777; background: repeating-linear-gradient(90deg, #777 0 1px, transparent 1px 2px) 0 8px / 11px 1px no-repeat; }
.component-list svg { width: 11px; height: 11px; margin: 0 4px 0 12px; }
.component-list span { width: 50px; padding-left: 4px; }
.component-list .current { background: linear-gradient(#2d64c0, #2d64c0) 8px 0 / 69px 16px no-repeat; color: #05163c; }

.drawing { display: flex; flex-direction: column; flex: none; width: 325px; background: #fff; }
.drawing-tools { flex: none; height: 29px; background: linear-gradient(#fbfbfb, #efefef); border-bottom: 1px solid #ddd; }
.mdi { display: flex; flex: 1; min-height: 0; margin-top: 21px; padding-right: 5px; gap: 1px; background: #f5f5f5; }
.child { display: flex; flex-direction: column; flex: 1; min-width: 0; border: solid #445; border-width: 1px 1px 0 0; background: linear-gradient(#bccbd9, #d9e4f1 34px); padding: 32px 7px 5px 0; }
.child-frame { display: flex; flex-direction: column; flex: 1; min-height: 0; border: 1px solid #fff; background: #f0f0f0; padding-right: 3px; }
.child-tools { display: flex; align-items: center; flex: none; gap: 7px; height: 34px; padding-left: 23px; background: linear-gradient(#fbfbfb, #efefef); }
.child-tools .caret { margin-left: 3px; }
.child-tools .i16 { margin-right: -1px; }
.child-tools .more { margin: 0 0 12px auto; }
.child-tools.second { gap: 9px; height: 26px; padding: 0 0 4px 8px; background: #f3f3f3; }
.model { flex: 1; min-height: 0; border: 3px solid #d01018; border-left: 0; background: #13161e; }
.model svg { width: 100%; height: 100%; }
.model-label { font: 7px "DejaVu Sans", sans-serif; fill: #fff; }
.child-tip { flex: none; height: 32px; padding-top: 8px; width: 25px; white-space: nowrap; }
.child-status { display: flex; align-items: center; flex: none; height: 22px; margin-top: 2px; background: linear-gradient(#fff, #eee); border-top: 1px solid #ccc; white-space: nowrap; }
.scrollbar { display: flex; flex-direction: column; align-items: center; flex: none; width: 15px; margin-top: 3px; padding: 8px 0 4px; border: 1px solid #999; background: #f2f2f2; gap: 6px; }
.scrollbar svg { width: 9px; height: 6px; }
.scrollbar i { flex: none; width: 13px; height: 390px; background: #cdcdcd; }
.scrollbar svg:last-child { margin-top: auto; }

.hidden-box { position: absolute; left: 705px; top: 56px; width: 62px; height: 20px; border: 1px solid #555; }

.editor { position: absolute; left: 308px; right: 306px; top: 59px; bottom: 0; display: flex; flex-direction: column; background: #f0f0f0; box-shadow: 0 0 14px rgba(0, 0, 0, .45); white-space: nowrap; overflow: hidden; }
.editor-title { display: flex; align-items: center; justify-content: space-between; flex: none; height: 31px; padding: 0 1px 2px 8px; background: #fff; color: #8d8d8d; }
.editor-title button { width: 19px; height: 19px; background: #dcdcdc; color: #f4f4f4; }
.editor-tools { display: flex; align-items: center; flex: none; gap: 7px; height: 27px; padding: 0 0 3px 4px; background: linear-gradient(#fdfdfd, #eee); border-top: 1px solid #e4e4e4; }
.editor-tools .grip { margin-right: -1px; }
.off { color: #8a8a8a; }
.editor-options { display: flex; align-items: center; flex: none; height: 28px; margin: 0; padding: 0 0 2px 4px; background: linear-gradient(#fdfdfd, #eee); border-top: 1px solid #f8f8f8; }
.editor-options label { display: flex; align-items: center; }
.editor-options input[type="radio"] { appearance: none; width: 11px; height: 11px; margin: 0 9px 0 0; border: 1px solid #777; border-radius: 50%; background: #fff; }
.editor-options input[type="radio"]:checked { background: radial-gradient(#111 0 2px, #fff 3px); }
.r1 { margin-left: 3px; width: 66px; }
.r2 { width: 51px; }
.r3 { width: 70px; }
.offset { width: 144px; padding-left: 2px; white-space: pre; font-family: "Noto Sans", "Noto Sans CJK SC", sans-serif; }
.spin { display: flex; align-items: center; width: 78px; height: 23px; margin: 0 5px 0 6px; border: 1px solid #777; background: #f3f3f3; }
.spin input { flex: 1; min-width: 0; height: 100%; border: 0; padding: 0; background: none; text-align: right; color: #777; }
.spin svg { width: 5px; height: 16px; margin: 0 4px 0 9px; }
.editor-canvas { flex: 1; min-height: 0; background: #000; }
.editor-canvas svg { width: 100%; height: 100%; }
.dim { font: bold 15px "DejaVu Serif", serif; fill: #08f01c; }
.step { font: 12px "DejaVu Sans Mono", monospace; fill: #b9b9b9; }
.editor-tab { flex: none; height: 28px; border-bottom: 1px solid #a5a5a5; }
.editor-tab button { width: 62px; height: 27px; background: linear-gradient(#fff, #f2f2f2); }
.editor-actions { display: flex; align-items: center; justify-content: flex-end; flex: none; height: 41px; padding-right: 13px; }
.push { flex: none; height: 23px; border: 1px solid #adadad; background: #e1e1e1; font-family: "Noto Sans Mono CJK SC", "Noto Sans CJK SC", monospace; }
.w105 { width: 105px; margin-right: 23px; }
.w113 { width: 113px; margin-right: 25px; }
.w72 { width: 72px; }
.w72 + .w72 { margin-left: 15px; }
.editor-status { display: flex; flex: none; height: 18px; border-top: 1px solid #ccc; font-family: "Noto Sans Mono CJK SC", "Noto Sans CJK SC", monospace; }
.editor-status span { width: 150px; padding-left: 2px; line-height: 18px; border-right: 1px solid #ccc; }
.editor-status span:last-child { flex: 1; border: 0; }

.grid-dialog { position: absolute; left: 1003px; right: 0; top: 249px; overflow: hidden; border: 1px solid #2b86d8; border-right: 0; background: #f0f0f0; box-shadow: 0 2px 10px rgba(0, 0, 0, .35); white-space: nowrap; }
.grid-dialog h2 { height: 25px; padding: 3px 3px; background: #fff; }
.grid-body { padding: 14px 0 8px 13px; font-family: "Noto Sans Mono CJK SC", "Noto Sans CJK SC", monospace; }
.grid-body fieldset { min-width: 0; margin: 0 0 8px; padding: 2px 0 5px 7px; border: 1px solid #dcdcdc; border-right: 0; }
.grid-body legend { padding: 0 4px 0 0; line-height: 16px; }
.grid-body textarea { display: block; width: 100%; height: 41px; padding: 0 2px; border: 1px solid #777; border-right: 0; border-radius: 0; outline: 0; resize: none; background: #fff; overflow: hidden; }
.grid-body textarea.active { border-color: #0078d7; }
textarea::selection { background: #0078d7; color: #fff; }
.grid-actions { display: flex; padding: 5px 0 0 223px; }

.ime { position: absolute; left: 578px; top: 0; display: flex; }
.sogou { width: 29px; height: 28px; z-index: 1; }
.ime-bar { display: flex; align-items: center; gap: 6px; height: 23px; margin: 3px 0 0 -2px; padding: 0 3px 0 7px; border: 1px solid #b9c6d6; background: #fff; color: #2272bd; }
.ime-bar svg { width: 16px; height: 16px; }
.ime-bar span { width: 16px; font-size: 15px; font-weight: 700; }
.ball { position: absolute; left: 931px; top: -28px; width: 46px; height: 46px; padding-top: 27px; border: 2px solid #e4f4e6; border-radius: 50%; background: #36c052; color: #fff; text-align: center; font: bold 11px/14px "DejaVu Sans", sans-serif; box-shadow: 0 1px 4px rgba(0, 0, 0, .6); }
```
